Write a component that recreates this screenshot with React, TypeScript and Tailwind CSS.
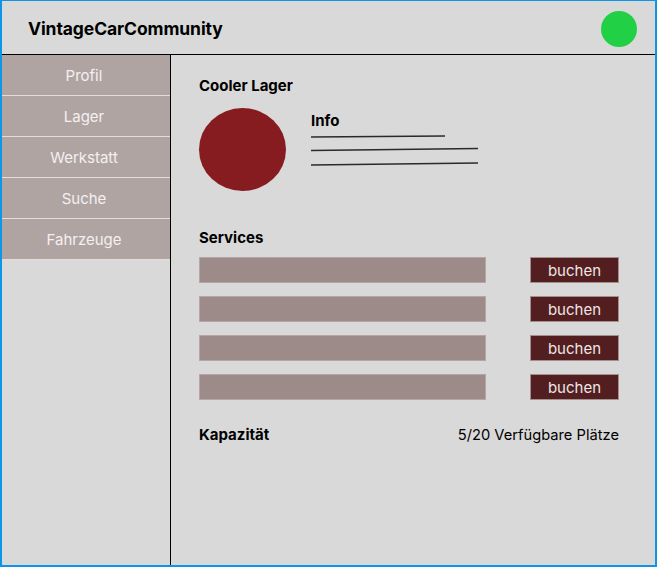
import React from "react";

const navItems = ["Profil", "Lager", "Werkstatt", "Suche", "Fahrzeuge"];

export default function App() {
  return (
    <div
      className="w-[657px] h-[567px] bg-[#d9d9d9] border-[#0d96e6] border-t border-l-2 border-r-2 border-b-2 flex flex-col overflow-hidden"
      style={{ fontFamily: "Inter, 'Noto Sans', sans-serif" }}
    >
      <header className="h-[54px] shrink-0 flex items-center justify-between pl-[26px] pr-[18px] pt-[4px] border-b border-black">
        <h1 className="text-[17.5px] font-bold text-black tracking-[-0.1px]">VintageCarCommunity</h1>
        <div className="w-[36px] h-[36px] rounded-full bg-[#22d046] -mt-[2px]" />
      </header>
      <div className="flex flex-1 min-h-0">
        <nav className="w-[169px] shrink-0 border-r border-black flex flex-col">
          {navItems.map((item) => (
            <div
              key={item}
              className="h-[41px] flex items-center justify-center pt-[3px] pr-[4px] bg-[#b0a4a3] border-b-[1.5px] border-[#e2dcdb] text-[15px] text-[#f4f0f0]"
            >
              {item}
            </div>
          ))}
        </nav>
        <main className="flex-1 pl-[28px] pr-[36px] pt-[21px] text-black">
          <h2 className="text-[15px] font-bold leading-[20px]">Cooler Lager</h2>
          <div className="flex mt-[12px]">
            <div className="w-[87px] h-[83px] rounded-[50%] bg-[#861b20]" />
            <div className="ml-[25px] pt-[3px]">
              <div className="text-[15px] font-bold leading-[20px]">Info</div>
              <svg width="170" height="46" className="block -mt-[4px]">
                <line x1="0" y1="10" x2="134" y2="9" stroke="#2a2a2a" strokeWidth="1.3" />
                <line x1="0" y1="23.5" x2="167" y2="21.5" stroke="#2a2a2a" strokeWidth="1.3" />
                <line x1="0" y1="38" x2="167" y2="36" stroke="#2a2a2a" strokeWidth="1.3" />
              </svg>
            </div>
          </div>
          <h2 className="text-[15px] font-bold leading-[20px] mt-[37px]">Services</h2>
          <div className="flex flex-col gap-[13px] mt-[9px]">
            {[0, 1, 2, 3].map((i) => (
              <div key={i} className="flex items-center justify-between">
                <div className="w-[287px] h-[26px] bg-[#9d8b8a] border border-[#b3a6a5]" />
                <button className="w-[89px] h-[26px] bg-[#521e20] border border-[#a58e8e] text-[15px] text-[#efe6e6] leading-none pt-[1px]">
                  buchen
                </button>
              </div>
            ))}
          </div>
          <div className="flex items-center justify-between mt-[25px] text-[15px] leading-[20px]">
            <span className="font-bold">Kapazität</span>
            <span className="text-[14.7px]">5/20 Verfügbare Plätze</span>
          </div>
        </main>
      </div>
    </div>
  );
}
